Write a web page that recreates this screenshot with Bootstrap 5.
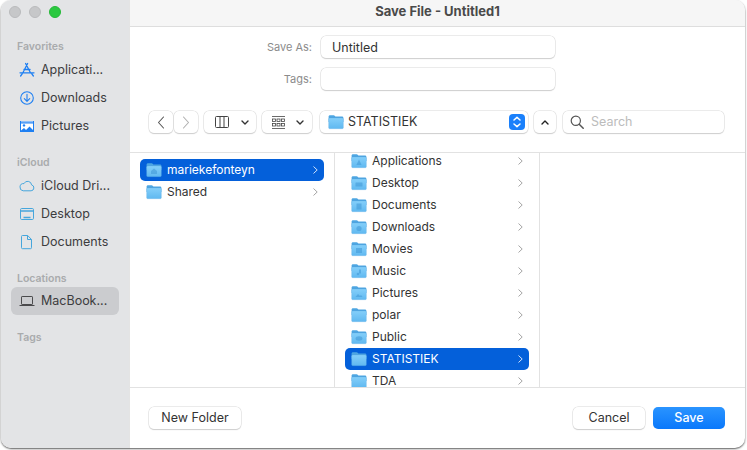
<!DOCTYPE html>
<html lang="en">
<head>
  <meta charset="UTF-8">
  <title>Save File - Untitled1</title>
  <meta name="viewport" content="width=device-width, initial-scale=1">
  <link rel="stylesheet" href="https://cdn.jsdelivr.net/npm/bootstrap@5.3.0/dist/css/bootstrap.min.css">
  <style>
    html, body { height: 100%; margin: 0; background: #fff; overflow: hidden; }
    body { font-family: Inter, "Liberation Sans", sans-serif; font-size: 12.5px; color: #333; }
    .mac-window { width: 744px; height: 448px; margin-left: 1px; border-radius: 10px; overflow: hidden; box-shadow: 0 1px 2px rgba(0,0,0,.65); background: #fff; }
    /* sidebar */
    .side-pane { width: 129px; flex: none; background: #e3e4e6; padding: 6px 10px 0; border-right: 1px solid #e4e4e4; }
    .lights { height: 32px; margin-left: -2px; }
    .light { width: 12px; height: 12px; border-radius: 50%; background: #c6c7c9; border: 1px solid #b9babc; }
    .light-green { background: #2bc840; border-color: #25b838; }
    .side-label { height: 18px; line-height: 18px; padding-left: 6px; font-size: 10.5px; font-weight: 600; color: #a9abad; }
    .side-item { height: 28px; width: 108px; padding-left: 8px; gap: 6px; border-radius: 6px; color: #3c3c3e; white-space: nowrap; }
    .side-item svg { width: 16px; height: 16px; flex: none; }
    .side-item.is-on { background: #cbcccf; margin-top: -1px; margin-bottom: 1px; }
    .side-gap { margin-top: 14px; }
    /* title and form */
    .title-bar { height: 27px; padding-bottom: 2px; background: #f6f6f6; border-bottom: 1px solid #dedede; font-size: 13px; font-weight: 700; color: #4a4a4a; }
    .form-rows { padding: 9px 0 0; }
    .form-line { height: 22px; margin-bottom: 10px; }
    .form-name { width: 182px; margin-right: 8px; text-align: right; font-size: 11px; color: #8b8b8b; }
    .mac-field { width: 234px; height: 22px; margin-left: 1px; padding: 0 11px; border-radius: 5px; background: #fff; box-shadow: 0 0 0 .5px #d8d8d8, 0 1px 1px rgba(0,0,0,.22); line-height: 23px; color: #333; }
    /* toolbar */
    .tool-row { height: 22px; margin-top: 11px; padding-left: 19px; }
    .tool-btn { height: 22px; background: #fff; border-radius: 5px; box-shadow: 0 0 0 .5px #d8d8d8, 0 1px 1px rgba(0,0,0,.22); }
    .tool-btn svg { flex: none; }
    .path-btn { width: 208px; padding-left: 8px; gap: 4px; color: #333; font-size: 12.5px; }
    .path-arrows { width: 16px; height: 16px; margin: 0 3px 0 auto; border-radius: 4px; background: #1a80fb; }
    .search-box { width: 161px; padding-left: 7px; gap: 7px; color: #bcbcbc; font-size: 12.5px; }
    /* column browser */
    .browser { height: 236px; margin-top: 19px; border-top: 1px solid #e2e2e2; border-bottom: 1px solid #e2e2e2; }
    .browser-col { width: 205px; flex: none; border-right: 1px solid #e2e2e2; overflow: hidden; padding: 0 10px; }
    .browser-col:last-child { border-right: 0; flex: 1; }
    .col-home { padding-top: 6px; }
    .col-folders { margin-top: -3px; }
    .file-row { height: 22px; padding: 0 6px; gap: 5px; border-radius: 5px; color: #333; white-space: nowrap; font-size: 12px; }
    .file-row .folder-ico { width: 16px; height: 16px; flex: none; }
    .file-row .chev { margin-left: auto; flex: none; }
    .file-row.is-on { background: #0460da; color: #fff; }
    /* footer */
    .foot-row { padding: 19px 20px 0 19px; }
    .foot-btn { height: 22px; padding: 0; border: 0; border-radius: 5px; background: #fff; box-shadow: 0 0 0 .5px #d8d8d8, 0 1px 1px rgba(0,0,0,.22); color: #333; font-size: 12.5px; line-height: 22px; }
    .foot-save { background: linear-gradient(#2a94ff, #0a78fb); color: #fff; font-weight: 500; box-shadow: none; }
  </style>
</head>
<body>
  <svg width="0" height="0" class="d-block">
    <defs>
      <linearGradient id="folderFace" x1="0" y1="0" x2="0" y2="1">
        <stop offset="0" stop-color="#84cffa"/>
        <stop offset="1" stop-color="#5fb8f0"/>
      </linearGradient>
      <symbol id="folder" viewBox="0 0 16 16">
        <path d="M.6 2.6C.6 1.8 1.2 1.2 2 1.2h3.6c.5 0 .8.2 1.1.6l.7.8h6.6c.8 0 1.4.6 1.4 1.4V8H.6z" fill="#4ea6e2"/>
        <rect x=".6" y="4" width="14.8" height="10.8" rx="1.2" fill="url(#folderFace)" stroke="#4f9fd8" stroke-opacity=".35" stroke-width=".5"/>
      </symbol>
      <symbol id="chevron" viewBox="0 0 5 8">
        <path d="M.8.8L4.2 4 .8 7.2" fill="none" stroke="currentColor" stroke-width=".9" stroke-linecap="round" stroke-linejoin="round"/>
      </symbol>
    </defs>
  </svg>

  <div class="mac-window d-flex">
    <!-- Sidebar -->
    <aside class="side-pane">
      <div class="lights d-flex align-items-start gap-2">
        <span class="light"></span><span class="light"></span><span class="light light-green"></span>
      </div>
      <div class="side-label">Favorites</div>
      <div class="side-item d-flex align-items-center">
        <svg viewBox="0 0 16 16" fill="none" stroke="#1e7ff2" stroke-width="1.3" stroke-linecap="round"><path d="M8.6 1.5L4 10.5M6.6 1.5l5 9.5M1 10.8h14M1.6 14l1.6-2.2M14.4 14l-1.6-2.2M5 7.5h6"/></svg>
        <span>Applicati...</span>
      </div>
      <div class="side-item d-flex align-items-center">
        <svg viewBox="0 0 16 16" fill="none" stroke="#1e7ff2" stroke-width="1.1" stroke-linecap="round" stroke-linejoin="round"><circle cx="8" cy="8" r="6.3"/><path d="M8 4.2v7M5.3 8.6L8 11.3l2.7-2.7"/></svg>
        <span>Downloads</span>
      </div>
      <div class="side-item d-flex align-items-center">
        <svg viewBox="0 0 16 16"><path fill="#1e7ff2" d="M1 3h14v11H1z"/><path fill="#fff" d="M2 5.5h12V12l-3.5-3.6L7 12 5 10l-3 2.6zM2 3.6h12v.7H2z"/><circle cx="5" cy="7.4" r="1.2" fill="#1e7ff2"/></svg>
        <span>Pictures</span>
      </div>
      <div class="side-label side-gap">iCloud</div>
      <div class="side-item d-flex align-items-center">
        <svg viewBox="0 0 16 16" fill="none" stroke="#46a6dc" stroke-width="1"><path d="M4.2 12.8h7.9a3 3 0 0 0 .5-5.9A4 4 0 0 0 5 5.6a3.6 3.6 0 0 0-.8 7.2z"/></svg>
        <span>iCloud Dri...</span>
      </div>
      <div class="side-item d-flex align-items-center">
        <svg viewBox="0 0 16 16" fill="none" stroke="#46a6dc"><rect x="1.5" y="2.5" width="13" height="11" rx="1.2"/><path d="M2 5h12" stroke-width="1.6"/><path d="M4.5 11.5h7" stroke-width="1.4"/></svg>
        <span>Desktop</span>
      </div>
      <div class="side-item d-flex align-items-center">
        <svg viewBox="0 0 16 16" fill="none" stroke="#46a6dc"><path d="M3.5 1.5h5.2l3.8 4v8.2a1 1 0 0 1-1 1h-8a1 1 0 0 1-1-1V2.5a1 1 0 0 1 1-1zM8.5 1.5v4h4"/></svg>
        <span>Documents</span>
      </div>
      <div class="side-label side-gap">Locations</div>
      <div class="side-item is-on d-flex align-items-center">
        <svg viewBox="0 0 16 16" fill="none" stroke="#4a4a4c"><rect x="2.5" y="3.5" width="11" height="8" rx=".6"/><path d="M.5 12.5h15"/></svg>
        <span>MacBook...</span>
      </div>
      <div class="side-label side-gap">Tags</div>
    </aside>

    <!-- Main pane -->
    <main class="flex-grow-1 d-flex flex-column">
      <div class="title-bar d-flex align-items-center justify-content-center">Save File - Untitled1</div>

      <div class="form-rows">
        <div class="form-line d-flex align-items-center">
          <div class="form-name">Save As:</div>
          <div class="mac-field">Untitled</div>
        </div>
        <div class="form-line d-flex align-items-center">
          <div class="form-name">Tags:</div>
          <div class="mac-field"></div>
        </div>
      </div>

      <div class="tool-row d-flex">
        <div class="tool-btn d-flex align-items-center justify-content-center" style="width:24px">
          <svg width="8" height="13" viewBox="0 0 8 13" fill="none" stroke="#555" stroke-width="1.1" stroke-linecap="round" stroke-linejoin="round"><path d="M6.5 1L1.5 6.5l5 5.5"/></svg>
        </div>
        <div class="tool-btn d-flex align-items-center justify-content-center" style="width:24px;margin-left:1px">
          <svg width="8" height="13" viewBox="0 0 8 13" fill="none" stroke="#b0b0b0" stroke-width="1.1" stroke-linecap="round" stroke-linejoin="round"><path d="M1.5 1l5 5.5-5 5.5"/></svg>
        </div>
        <div class="tool-btn d-flex align-items-center" style="width:52px;margin-left:6px;padding-left:11px;gap:12px">
          <svg width="14" height="12" viewBox="0 0 14 12" fill="none" stroke="#444"><rect x=".5" y=".5" width="13" height="11" rx="1"/><path d="M5 .5v11M9 .5v11"/></svg>
          <svg width="8" height="5" viewBox="0 0 8 5" fill="none" stroke="#333" stroke-width="1.4" stroke-linecap="round" stroke-linejoin="round"><path d="M1 1l3 3 3-3"/></svg>
        </div>
        <div class="tool-btn d-flex align-items-center" style="width:50px;margin-left:6px;padding-left:10px;gap:11px">
          <svg width="13" height="13" viewBox="0 0 13 13" fill="none" stroke="#444" stroke-width=".8"><path d="M0 .5h13M0 12.5h13"/><rect x=".5" y="3" width="3" height="2.5"/><rect x="5" y="3" width="3" height="2.5"/><rect x="9.5" y="3" width="3" height="2.5"/><rect x=".5" y="7.5" width="3" height="2.5"/><rect x="5" y="7.5" width="3" height="2.5"/><rect x="9.5" y="7.5" width="3" height="2.5"/></svg>
          <svg width="8" height="5" viewBox="0 0 8 5" fill="none" stroke="#333" stroke-width="1.4" stroke-linecap="round" stroke-linejoin="round"><path d="M1 1l3 3 3-3"/></svg>
        </div>
        <div class="tool-btn path-btn d-flex align-items-center" style="margin-left:8px">
          <svg width="16" height="16"><use href="#folder"/></svg>
          <span>STATISTIEK</span>
          <span class="path-arrows d-flex align-items-center justify-content-center">
            <svg width="10" height="12" viewBox="0 0 10 12" fill="none" stroke="#fff" stroke-width="1.5" stroke-linecap="round" stroke-linejoin="round"><path d="M2 4l3-2.6L8 4M2 8l3 2.6L8 8"/></svg>
          </span>
        </div>
        <div class="tool-btn d-flex align-items-center justify-content-center" style="width:22px;margin-left:6px">
          <svg width="8" height="5" viewBox="0 0 8 5" fill="none" stroke="#222" stroke-width="1.4" stroke-linecap="round" stroke-linejoin="round"><path d="M1 4l3-3 3 3"/></svg>
        </div>
        <div class="tool-btn search-box d-flex align-items-center" style="margin-left:7px">
          <svg width="14" height="14" viewBox="0 0 14 14" fill="none" stroke="#555" stroke-width="1.2" stroke-linecap="round"><circle cx="5.8" cy="5.8" r="4.6"/><path d="M9.2 9.2l4 4" stroke-width="1.5"/></svg>
          <span>Search</span>
        </div>
      </div>

      <div class="browser d-flex">
        <div class="browser-col col-home" id="homeCol"></div>
        <div class="browser-col" ><div class="col-folders" id="folderCol"></div></div>
        <div class="browser-col"></div>
      </div>

      <div class="foot-row d-flex">
        <button type="button" class="btn foot-btn" style="width:92px">New Folder</button>
        <button type="button" class="btn foot-btn ms-auto" style="width:72px">Cancel</button>
        <button type="button" class="btn foot-btn foot-save ms-2" style="width:72px">Save</button>
      </div>
    </main>
  </div>

  <script src="https://cdn.jsdelivr.net/npm/bootstrap@5.3.0/dist/js/bootstrap.bundle.min.js"></script>
  <script>
    // small darker glyphs drawn on the folder face
    const glyphs = {
      home: '<path d="M8 6.5l3 2.6v3H5v-3z"/>',
      apps: '<path d="M8 6.5l2.6 5.5H5.4z"/>',
      desk: '<rect x="4.5" y="7.5" width="7" height="4" rx=".5"/>',
      docs: '<rect x="5.5" y="6.5" width="5" height="6"/>',
      down: '<circle cx="8" cy="9.5" r="2.6"/>',
      movi: '<rect x="5" y="7" width="6" height="5"/>',
      musi: '<circle cx="7" cy="11" r="1.3"/><path d="M8 6.5h2v4H8z"/>',
      pict: '<path d="M4.5 12l2.5-3 2 2 1-1 1.5 2z"/>',
      publ: '<ellipse cx="8" cy="9.5" rx="3.4" ry="2.2"/>'
    };

    function fileRow(name, glyph, selected) {
      const inner = glyph ? `<g fill="#3f97d6" opacity=".55">${glyphs[glyph]}</g>` : "";
      return `
        <div class="file-row d-flex align-items-center ${selected ? "is-on" : ""}">
          <svg class="folder-ico" viewBox="0 0 16 16"><use href="#folder"/>${inner}</svg>
          <span>${name}</span>
          <svg class="chev" width="5" height="8" style="color:${selected ? "#e6f0ff" : "#9b9b9b"}"><use href="#chevron"/></svg>
        </div>`;
    }

    document.getElementById("homeCol").innerHTML =
      fileRow("mariekefonteyn", "home", true) + fileRow("Shared", "", false);

    const folders = [
      ["Applications", "apps"], ["Desktop", "desk"], ["Documents", "docs"], ["Downloads", "down"],
      ["Movies", "movi"], ["Music", "musi"], ["Pictures", "pict"], ["polar", ""],
      ["Public", "publ"], ["STATISTIEK", ""], ["TDA", ""]
    ];
    document.getElementById("folderCol").innerHTML =
      folders.map(f => fileRow(f[0], f[1], f[0] === "STATISTIEK")).join("");
  </script>
</body>
</html>
